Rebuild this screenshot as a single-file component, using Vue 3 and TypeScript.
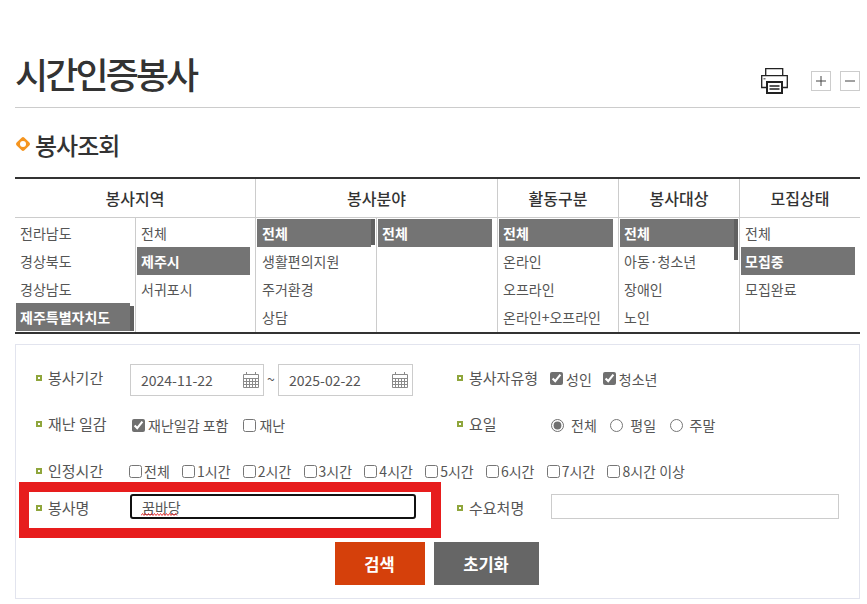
<script setup lang="ts">
interface Item { text: string; on?: boolean }
interface Sub { width: number; items: Item[]; thumb?: number; thumbTop?: number }
interface Col { title: string; width: number; subs: Sub[] }

const cols: Col[] = [
  { title: '봉사지역', width: 240, subs: [
    { width: 120, thumb: 25, thumbTop: 88, items: [{ text: '전라남도' }, { text: '경상북도' }, { text: '경상남도' }, { text: '제주특별자치도', on: true }] },
    { width: 120, items: [{ text: '전체' }, { text: '제주시', on: true }, { text: '서귀포시' }] },
  ] },
  { title: '봉사분야', width: 242, subs: [
    { width: 120, thumb: 26, thumbTop: 1, items: [{ text: '전체', on: true }, { text: '생활편의지원' }, { text: '주거환경' }, { text: '상담' }] },
    { width: 121, items: [{ text: '전체', on: true }] },
  ] },
  { title: '활동구분', width: 121, subs: [{ width: 120, items: [{ text: '전체', on: true }, { text: '온라인' }, { text: '오프라인' }, { text: '온라인+오프라인' }] }] },
  { title: '봉사대상', width: 121, subs: [{ width: 120, thumb: 41, thumbTop: 1, items: [{ text: '전체', on: true }, { text: '아동·청소년' }, { text: '장애인' }, { text: '노인' }] }] },
  { title: '모집상태', width: 121, subs: [{ width: 120, items: [{ text: '전체' }, { text: '모집중', on: true }, { text: '모집완료' }] }] },
]

const hours = ['전체', '1시간', '2시간', '3시간', '4시간', '5시간', '6시간', '7시간', '8시간 이상']
const dates = ['2024-11-22', '2025-02-22']
const days = ['전체', '평일', '주말']
</script>

<template>
  <div class="page">
    <header class="head">
      <h1 class="title">시간인증봉사</h1>
      <div class="tools">
        <svg class="printer" width="27" height="26" viewBox="0 0 27 26" fill="none" stroke="#222" stroke-width="1.3">
          <path d="M4.7 7.5V.7h17v6.8" />
          <path d="M5 19.5H.7V7.7h25.6v11.8H22" fill="#fff" />
          <rect x="6" y="14" width="15" height="11" stroke-width="2" fill="#fff" />
          <path d="M8.5 18h10M8.5 21h10" stroke-width="1.4" />
          <rect x="2.5" y="10" width="2" height="1.5" fill="#777" stroke="none" />
        </svg>
        <button class="zoom" type="button" aria-label="확대">
          <svg width="10" height="10" viewBox="0 0 10 10"><path d="M0 5h10M5 0v10" stroke="#444" stroke-width="1" /></svg>
        </button>
        <button class="zoom" type="button" aria-label="축소">
          <svg width="10" height="10" viewBox="0 0 10 10"><path d="M0 5h10" stroke="#444" stroke-width="1" /></svg>
        </button>
      </div>
    </header>

    <h2 class="section">
      <svg width="16" height="16" viewBox="0 0 16 16">
        <rect x="2.5" y="2.5" width="11" height="11" rx="2" transform="rotate(45 8 8)" fill="#f5951f" />
        <circle cx="8" cy="8" r="3" fill="#fff" />
      </svg>
      <span>봉사조회</span>
    </h2>

    <div class="filter">
      <div v-for="col in cols" :key="col.title" class="col" :style="{ width: col.width + 'px' }">
        <div class="col-title">{{ col.title }}</div>
        <div class="subs">
          <ul v-for="(sub, i) in col.subs" :key="i" class="list" :style="{ width: sub.width + 'px' }">
            <li v-for="item in sub.items" :key="item.text" class="item" :class="{ on: item.on }">{{ item.text }}</li>
            <li v-if="sub.thumb" class="thumb" :style="{ height: sub.thumb + 'px', top: sub.thumbTop + 'px' }"></li>
          </ul>
        </div>
      </div>
    </div>

    <form class="panel" @submit.prevent>
      <div class="row row-date">
        <div class="half">
          <span class="label">봉사기간</span>
          <div class="dates">
            <template v-for="(d, i) in dates" :key="d">
              <span v-if="i" class="tilde">~</span>
              <div class="date">
                <input class="date-input" type="text" :value="d" />
                <svg class="cal" width="16" height="16" viewBox="0 0 16 16" fill="none" stroke="#8a8a8a" stroke-width="1">
                  <path d="M.5 2.5h15v13H.5zM.5 6.5h15M.5 9.5h15M.5 12.5h15M3.5 6.5v9M6.5 6.5v9M9.5 6.5v9M12.5 6.5v9M3.5 0v3M12.5 0v3" />
                </svg>
              </div>
            </template>
          </div>
        </div>
        <div class="half">
          <span class="label">봉사자유형</span>
          <label class="opt first-adult"><input type="checkbox" checked />성인</label>
          <label class="opt gap-adult"><input type="checkbox" checked />청소년</label>
        </div>
      </div>

      <div class="row row-mid">
        <div class="half">
          <span class="label">재난 일감</span>
          <label class="opt first-dis"><input type="checkbox" checked />재난일감 포함</label>
          <label class="opt gap-dis"><input type="checkbox" />재난</label>
        </div>
        <div class="half">
          <span class="label">요일</span>
          <label v-for="(d, i) in days" :key="d" class="radio"><input type="radio" name="day" :checked="i === 0" />{{ d }}</label>
        </div>
      </div>

      <div class="row row-mid row-hours">
        <span class="label">인정시간</span>
        <label v-for="h in hours" :key="h" class="hour"><input type="checkbox" />{{ h }}</label>
      </div>

      <div class="row row-name">
        <div class="half">
          <span class="label">봉사명</span>
          <div class="name-wrap">
            <input class="name name-focus" type="text" value="꿈바당" />
            <svg class="squiggle" width="37" height="3" viewBox="0 0 37 3" fill="none" stroke="#e8343a" stroke-width="1">
              <path d="M0 2.5l1.5-2 1.5 2 1.5-2 1.5 2 1.5-2 1.5 2 1.5-2 1.5 2 1.5-2 1.5 2 1.5-2 1.5 2 1.5-2 1.5 2 1.5-2 1.5 2 1.5-2 1.5 2 1.5-2 1.5 2 1.5-2 1.5 2 1.5-2 1.5 2" />
            </svg>
          </div>
        </div>
        <div class="half">
          <span class="label">수요처명</span>
          <input class="name name-plain" type="text" />
        </div>
      </div>

      <div class="actions">
        <button class="btn search" type="button">검색</button>
        <button class="btn reset" type="button">초기화</button>
      </div>

      <div class="mark"></div>
    </form>
  </div>
</template>

<style>
html, body { margin: 0; background: #fff; }
</style>

<style scoped>
.page {
  width: 845px;
  margin-left: 15px;
  padding-top: 47px;
  font-family: "Noto Sans CJK KR", "Noto Sans", sans-serif;
  color: #555;
  font-size: 14px;
}
.head {
  display: flex;
  justify-content: space-between;
  align-items: flex-end;
  height: 60px;
  border-bottom: 1px solid #ccc;
}
.title {
  margin: 0 0 7px;
  font-size: 36px;
  line-height: 54px;
  font-weight: 500;
  letter-spacing: -2.9px;
  color: #333;
}
.tools {
  display: flex;
  align-items: center;
  gap: 9px;
  margin-bottom: 13px;
}
.printer { margin-right: 14px; margin-top: 1px; }
.zoom {
  display: flex;
  align-items: center;
  justify-content: center;
  width: 20px;
  height: 20px;
  padding: 0;
  background: #fff;
  border: 1px solid #ccc;
}
.section {
  display: flex;
  align-items: center;
  gap: 4px;
  height: 36px;
  margin: 18px 0 15px;
  font-size: 24px;
  font-weight: 500;
  letter-spacing: -1px;
  color: #333;
}
.filter {
  display: flex;
  border-top: 2px solid #333;
  border-bottom: 2px solid #333;
}
.col { box-sizing: border-box; border-left: 1px solid #ccc; }
.col:first-child { border-left: 0; }
.col-title {
  height: 38px;
  line-height: 38px;
  text-align: center;
  font-size: 16px;
  font-weight: 500;
  color: #333;
  border-bottom: 1px solid #ccc;
}
.subs { display: flex; height: 114px; }
.list {
  position: relative;
  box-sizing: border-box;
  margin: 0;
  padding: 1px 5px 0 1px;
  list-style: none;
  border-left: 1px solid #ccc;
}
.list:first-child { border-left: 0; }
.item {
  height: 28px;
  line-height: 28px;
  padding-left: 4px;
  white-space: nowrap;
}
.col:nth-child(2) .list:first-child .item { padding-left: 5px; }
.item.on { background: #747474; color: #fff; font-weight: 700; }
.thumb {
  position: absolute;
  right: 1px;
  width: 4px;
  background: #606060;
}
.panel {
  position: relative;
  box-sizing: border-box;
  height: 255px;
  margin-top: 10px;
  padding: 19px 0 0 20px;
  border: 1px solid #e2e4ee;
}
.row { display: flex; align-items: center; }
.row-date { height: 32px; }
.row-mid { height: 32px; margin-top: 13px; }
.row-hours { margin-top: 14px; }
.row-name { height: 25px; margin-top: 7px; }
.half { flex: none; display: flex; align-items: center; width: 421px; }
.half:last-child { width: 382px; }
.label {
  position: relative;
  flex: none;
  box-sizing: border-box;
  width: 94px;
  padding-left: 12px;
  font-size: 15px;
  line-height: 20px;
  white-space: nowrap;
}
.label::before {
  content: "";
  position: absolute;
  left: 0;
  top: 7px;
  width: 6px;
  height: 6px;
  box-sizing: border-box;
  border: 2px solid #8fa63c;
}
.row-date .label { margin-top: -4px; }
.row-mid .label { margin-top: -3px; }
.row-hours .label { margin-top: -1px; }
.row-name .label { margin-top: 2px; }
.dates { display: flex; align-items: center; }
.tilde { width: 14px; text-align: center; margin-top: -3px; }
.date { position: relative; }
.date-input {
  display: block;
  box-sizing: border-box;
  width: 134px;
  height: 32px;
  padding: 0 0 0 10px;
  border: 1px solid #ccc;
  border-radius: 0;
  font: inherit;
  color: #555;
  outline: none;
}
.date + .tilde + .date .date-input { width: 135px; }
.cal { position: absolute; right: 5px; top: 8px; }
.opt, .radio, .hour { display: inline-flex; align-items: center; white-space: nowrap; }
input[type="checkbox"], input[type="radio"] {
  flex: none;
  margin: 0;
  accent-color: #707070;
}
.opt input { margin-right: 3px; }
.first-adult { margin-top: -3px; margin-left: -1px; }
.gap-adult { margin-top: -3px; margin-left: 11px; }
.first-dis { margin-left: 2px; }
.gap-dis { margin-left: 15px; }
.radio input { margin-right: 7px; }
.radio { margin-left: 13.5px; }
.radio:first-of-type { margin-left: 0; }
.hour { margin-right: 12.25px; }
.hour input { margin-right: 2px; }
.row-hours .label { margin-right: -1px; }
.name-wrap { position: relative; }
.name {
  display: block;
  box-sizing: border-box;
  height: 25px;
  padding: 0 0 0 10px;
  font: inherit;
  color: #555;
  outline: none;
}
.name-focus { width: 286px; border: 2px solid #111; border-radius: 3px; }
.name-plain { width: 288px; border: 1px solid #ccc; border-radius: 0; }
.squiggle { position: absolute; left: 11px; top: 19px; }
.actions {
  display: flex;
  justify-content: center;
  gap: 9px;
  margin: 23px 0 0 -22px;
}
.btn {
  height: 43px;
  border: 0;
  padding: 0;
  color: #fff;
  font-family: inherit;
  font-size: 16.5px;
  font-weight: 700;
}
.search { width: 90px; background: #d5400b; }
.reset { width: 105px; background: #666; }
.mark {
  position: absolute;
  left: 3px;
  top: 137px;
  box-sizing: border-box;
  width: 422px;
  height: 56px;
  border: 10px solid #e71d1d;
  pointer-events: none;
}
</style>
